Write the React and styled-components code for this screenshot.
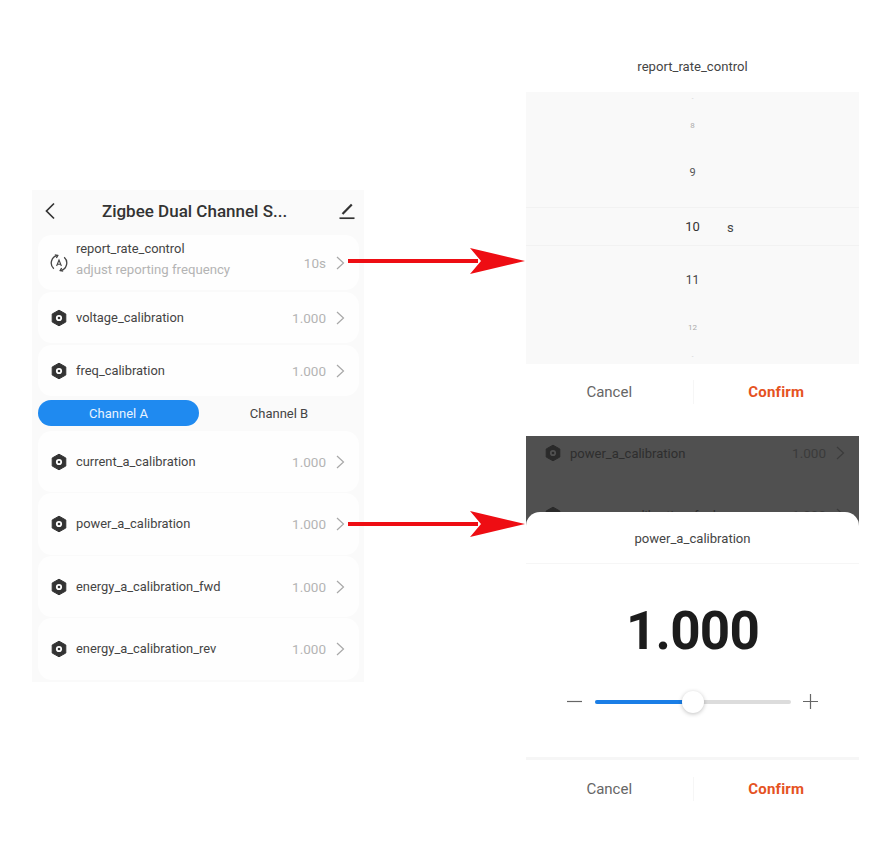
import React from "react";
import styled, { createGlobalStyle } from "styled-components";

const GlobalStyle = createGlobalStyle`
  html, body {
    margin: 0;
    padding: 0;
    background: #fff;
    font-family: Roboto, "Liberation Sans", sans-serif;
  }
`;

const Page = styled.div`
  position: relative;
  width: 892px;
  height: 866px;
  display: grid;
  grid-template-columns: 332px 333px;
  column-gap: 162px;
  padding-left: 32px;
  box-sizing: border-box;
  overflow: hidden;
`;

const PhonePanel = styled.div`
  margin-top: 190px;
  height: 492px;
  background: #fafafa;
  padding: 0 5px 0 6px;
  box-sizing: border-box;
  display: flex;
  flex-direction: column;
`;

const Header = styled.div`
  height: 45px;
  display: flex;
  align-items: center;
  justify-content: space-between;
  padding: 0 3px 3px 6px;
  box-sizing: border-box;
`;

const Title = styled.div`
  font-size: 17px;
  font-weight: 500;
  color: #333;
  margin-right: 5px;
`;

const Card = styled.div`
  height: ${(p) => p.$h}px;
  margin-bottom: ${(p) => p.$mb}px;
  background: #fefefe;
  border-radius: 14px;
  display: flex;
  align-items: center;
  padding: 0 14px 0 12px;
  flex-shrink: 0;
`;

const RowIcon = styled.svg`
  width: 18px;
  height: 18px;
  margin-right: 8px;
  flex-shrink: 0;
`;

const RowText = styled.div`
  flex: 1;
  display: flex;
  flex-direction: column;
  gap: 5px;
  padding-bottom: ${(p) => (p.$double ? 6 : 0)}px;
`;

const RowName = styled.div`
  font-size: 12.9px;
  line-height: 16px;
  color: #444;
`;

const RowHint = styled.div`
  font-size: 13.2px;
  line-height: 16px;
  color: #b4b4b4;
`;

const RowValue = styled.div`
  font-size: 13.5px;
  color: #b4b4b4;
  margin-right: 10px;
`;

const Tabs = styled.div`
  display: grid;
  grid-template-columns: 161px 160px;
  height: 26px;
  margin-bottom: 5px;
  flex-shrink: 0;
`;

const Tab = styled.div`
  border-radius: 13px;
  padding-top: 1px;
  box-sizing: border-box;
  display: flex;
  align-items: center;
  justify-content: center;
  font-size: 13px;
  color: ${(p) => (p.$active ? "#e8f3ff" : "#444")};
  background: ${(p) => (p.$active ? "#1f8af0" : "transparent")};
`;

const RightColumn = styled.div`
  display: flex;
  flex-direction: column;
`;

const SheetTitle = styled.div`
  font-size: 13.1px;
  color: #444;
  text-align: center;
  height: ${(p) => p.$h}px;
  line-height: ${(p) => p.$lh}px;
  flex-shrink: 0;
  border-bottom: ${(p) => (p.$line ? "1px solid #f6f6f6" : "none")};
  box-sizing: border-box;
`;

const Wheel = styled.div`
  height: 272px;
  background: #f9f9f9;
  display: flex;
  flex-direction: column;
  flex-shrink: 0;
`;

const WheelRow = styled.div`
  height: ${(p) => p.$h}px;
  display: flex;
  align-items: center;
  justify-content: center;
  font-size: ${(p) => p.$size}px;
  color: ${(p) => p.$color};
  flex-shrink: 0;
`;

const WheelBand = styled.div`
  position: relative;
  height: 39px;
  margin: 11px 0 12px;
  border-top: 1px solid #f2f2f2;
  border-bottom: 1px solid #f2f2f2;
  box-sizing: border-box;
  display: flex;
  align-items: center;
  justify-content: center;
  font-size: 13px;
  color: #333;
  flex-shrink: 0;
`;

const WheelUnit = styled.span`
  position: absolute;
  left: 201px;
  top: 12px;
  font-size: 13px;
  color: #444;
`;

const Actions = styled.div`
  height: ${(p) => p.$h}px;
  display: grid;
  grid-template-columns: 1fr 1fr;
  align-items: center;
  flex-shrink: 0;
`;

const ActionButton = styled.div`
  text-align: center;
  font-size: 15px;
  font-weight: ${(p) => (p.$primary ? 700 : 400)};
  letter-spacing: ${(p) => (p.$primary ? 0.2 : 0)}px;
  color: ${(p) => (p.$primary ? "#e5531f" : "#666")};
  border-left: ${(p) => (p.$primary ? "1px solid #f6f6f6" : "none")};
  line-height: 24px;
`;

const Dimmed = styled.div`
  margin-top: 16px;
  height: 92px;
  background: #505050;
  padding: 8px 14px 0 18px;
  box-sizing: border-box;
  overflow: hidden;
  flex-shrink: 0;
  display: flex;
  flex-direction: column;
  gap: 44px;
`;

const DimRow = styled.div`
  display: flex;
  align-items: center;
  height: 18px;
  flex-shrink: 0;
  color: #2e2e2e;
  font-size: 13px;
`;

const DimValue = styled.div`
  margin-left: auto;
  margin-right: 10px;
  font-size: 13.5px;
  color: #3b3b3b;
`;

const Sheet = styled.div`
  position: relative;
  margin-top: -16px;
  background: #fff;
  border-radius: 14px 14px 0 0;
  display: flex;
  flex-direction: column;
`;

const BigValue = styled.div`
  height: 128px;
  padding-top: 6px;
  box-sizing: border-box;
  display: flex;
  align-items: center;
  justify-content: center;
  font-size: 53px;
  font-weight: 700;
  letter-spacing: -0.8px;
  color: #1c1c1c;
`;

const SliderRow = styled.div`
  height: 68px;
  padding: 0 41px;
  display: flex;
  align-items: flex-start;
  justify-content: space-between;
  box-sizing: border-box;
  border-bottom: 3px solid #f6f6f6;
`;

const Step = styled.svg`
  width: 15px;
  height: 15px;
  margin-top: 2px;
`;

const Track = styled.div`
  position: relative;
  width: 196px;
  height: 4px;
  margin-top: 8px;
  border-radius: 2px;
  background: #dcdcdc;
`;

const TrackFill = styled.div`
  height: 100%;
  border-radius: 2px;
  background: #1a7ee6;
`;

const Thumb = styled.div`
  position: absolute;
  left: 87px;
  top: -9px;
  width: 22px;
  height: 22px;
  border-radius: 50%;
  background: #fff;
  box-shadow: 0 1px 4px rgba(0, 0, 0, 0.25);
`;

const Arrow = styled.svg`
  position: absolute;
  left: 348px;
  top: ${(p) => p.$top}px;
  width: 178px;
  height: 28px;
`;

const HexIcon = ({ fg = "#333", hole = "#fff" }) => (
  <RowIcon viewBox="0 0 18 18">
    <path d="M9 1.2 15.8 5v8L9 16.8 2.2 13V5z" fill={fg} stroke={fg} strokeLinejoin="round" />
    <circle cx="9" cy="9" r="3.1" fill={hole} />
    <circle cx="9" cy="9" r="1.3" fill={fg} />
  </RowIcon>
);

const AutoIcon = () => (
  <RowIcon viewBox="0 0 18 18" fill="none" stroke="#444" strokeWidth="1.3">
    <path d="M3.8 14.8A7.8 7.8 0 0 1 7.5 1.4" />
    <path d="M14.2 3.2A7.8 7.8 0 0 1 10.5 16.6" />
    <path d="M4.8.8 7.8 1.4 6.4 4" />
    <path d="M13.2 17.2 10.2 16.6 11.6 14" />
    <path d="M6.6 12 9 6l2.4 6M7.4 10.2h3.2" strokeWidth="1.1" />
  </RowIcon>
);

const Chevron = ({ color = "#a8a8a8" }) => (
  <svg width="9" height="14" viewBox="0 0 9 14" fill="none" stroke={color} strokeWidth="1.2">
    <path d="M1 1l6.5 6L1 13" />
  </svg>
);

const RedArrow = ({ top }) => (
  <Arrow $top={top} viewBox="0 0 178 28">
    <rect x="0" y="12" width="130" height="4" fill="#ee0d13" />
    <path d="M122 1 177 14 122 27 133 14z" fill="#ee0d13" />
  </Arrow>
);

const settingsTop = [
  { name: "voltage_calibration", h: 51, mb: 2 },
  { name: "freq_calibration", h: 51, mb: 4 },
];

const settingsA = [
  { name: "current_a_calibration", h: 61, mb: 1 },
  { name: "power_a_calibration", h: 62, mb: 1 },
  { name: "energy_a_calibration_fwd", h: 61, mb: 1 },
  { name: "energy_a_calibration_rev", h: 62, mb: 0 },
];

const SettingCard = ({ name, h, mb }) => (
  <Card $h={h} $mb={mb}>
    <HexIcon />
    <RowText>
      <RowName>{name}</RowName>
    </RowText>
    <RowValue>1.000</RowValue>
    <Chevron />
  </Card>
);

const App = () => (
  <Page>
    <GlobalStyle />
    <PhonePanel>
      <Header>
        <svg width="12" height="18" viewBox="0 0 12 18" fill="none" stroke="#333" strokeWidth="1.7">
          <path d="M10 1.5 2.5 9l7.5 7.5" />
        </svg>
        <Title>Zigbee Dual Channel S...</Title>
        <svg width="18" height="18" viewBox="0 0 18 18" fill="none" stroke="#333">
          <path d="M4.5 12 13.8 2.4" strokeWidth="2.2" />
          <path d="M1.5 16.2h15" strokeWidth="1.7" />
        </svg>
      </Header>
      <Card $h={55} $mb={2}>
        <AutoIcon />
        <RowText $double>
          <RowName>report_rate_control</RowName>
          <RowHint>adjust reporting frequency</RowHint>
        </RowText>
        <RowValue>10s</RowValue>
        <Chevron />
      </Card>
      {settingsTop.map((s) => (
        <SettingCard key={s.name} name={s.name} h={s.h} mb={s.mb} />
      ))}
      <Tabs>
        <Tab $active>Channel A</Tab>
        <Tab>Channel B</Tab>
      </Tabs>
      {settingsA.map((s) => (
        <SettingCard key={s.name} name={s.name} h={s.h} mb={s.mb} />
      ))}
    </PhonePanel>

    <RightColumn>
      <SheetTitle $h={92} $lh={134}>report_rate_control</SheetTitle>
      <Wheel>
        <WheelRow $h={10} $size={6} $color="#c4c4c4">-</WheelRow>
        <WheelRow $h={46} $size={8} $color="#aaa">8</WheelRow>
        <WheelRow $h={48} $size={11} $color="#555">9</WheelRow>
        <WheelBand>
          10
          <WheelUnit>s</WheelUnit>
        </WheelBand>
        <WheelRow $h={44} $size={12} $color="#444">11</WheelRow>
        <WheelRow $h={50} $size={8} $color="#aaa">12</WheelRow>
        <WheelRow $h={6} $size={6} $color="#c4c4c4">-</WheelRow>
      </Wheel>
      <Actions $h={56}>
        <ActionButton>Cancel</ActionButton>
        <ActionButton $primary>Confirm</ActionButton>
      </Actions>
      <Dimmed>
        <DimRow>
          <HexIcon fg="#2a2a2a" hole="#505050" />
          power_a_calibration
          <DimValue>1.000</DimValue>
          <Chevron color="#3b3b3b" />
        </DimRow>
        <DimRow>
          <HexIcon fg="#2a2a2a" hole="#505050" />
          energy_a_calibration_fwd
          <DimValue>1.000</DimValue>
          <Chevron color="#3b3b3b" />
        </DimRow>
      </Dimmed>
      <Sheet>
        <SheetTitle $h={52} $lh={54} $line>power_a_calibration</SheetTitle>
        <BigValue>1.000</BigValue>
        <SliderRow>
          <Step viewBox="0 0 15 15" stroke="#666" strokeWidth="1.2">
            <path d="M0 7.5h15" />
          </Step>
          <Track>
            <TrackFill style={{ width: "50%" }} />
            <Thumb />
          </Track>
          <Step viewBox="0 0 15 15" stroke="#666" strokeWidth="1.2">
            <path d="M0 7.5h15M7.5 0v15" />
          </Step>
        </SliderRow>
        <Actions $h={58}>
          <ActionButton>Cancel</ActionButton>
          <ActionButton $primary>Confirm</ActionButton>
        </Actions>
      </Sheet>
    </RightColumn>

    <RedArrow top={247} />
    <RedArrow top={510} />
  </Page>
);

export default App;
